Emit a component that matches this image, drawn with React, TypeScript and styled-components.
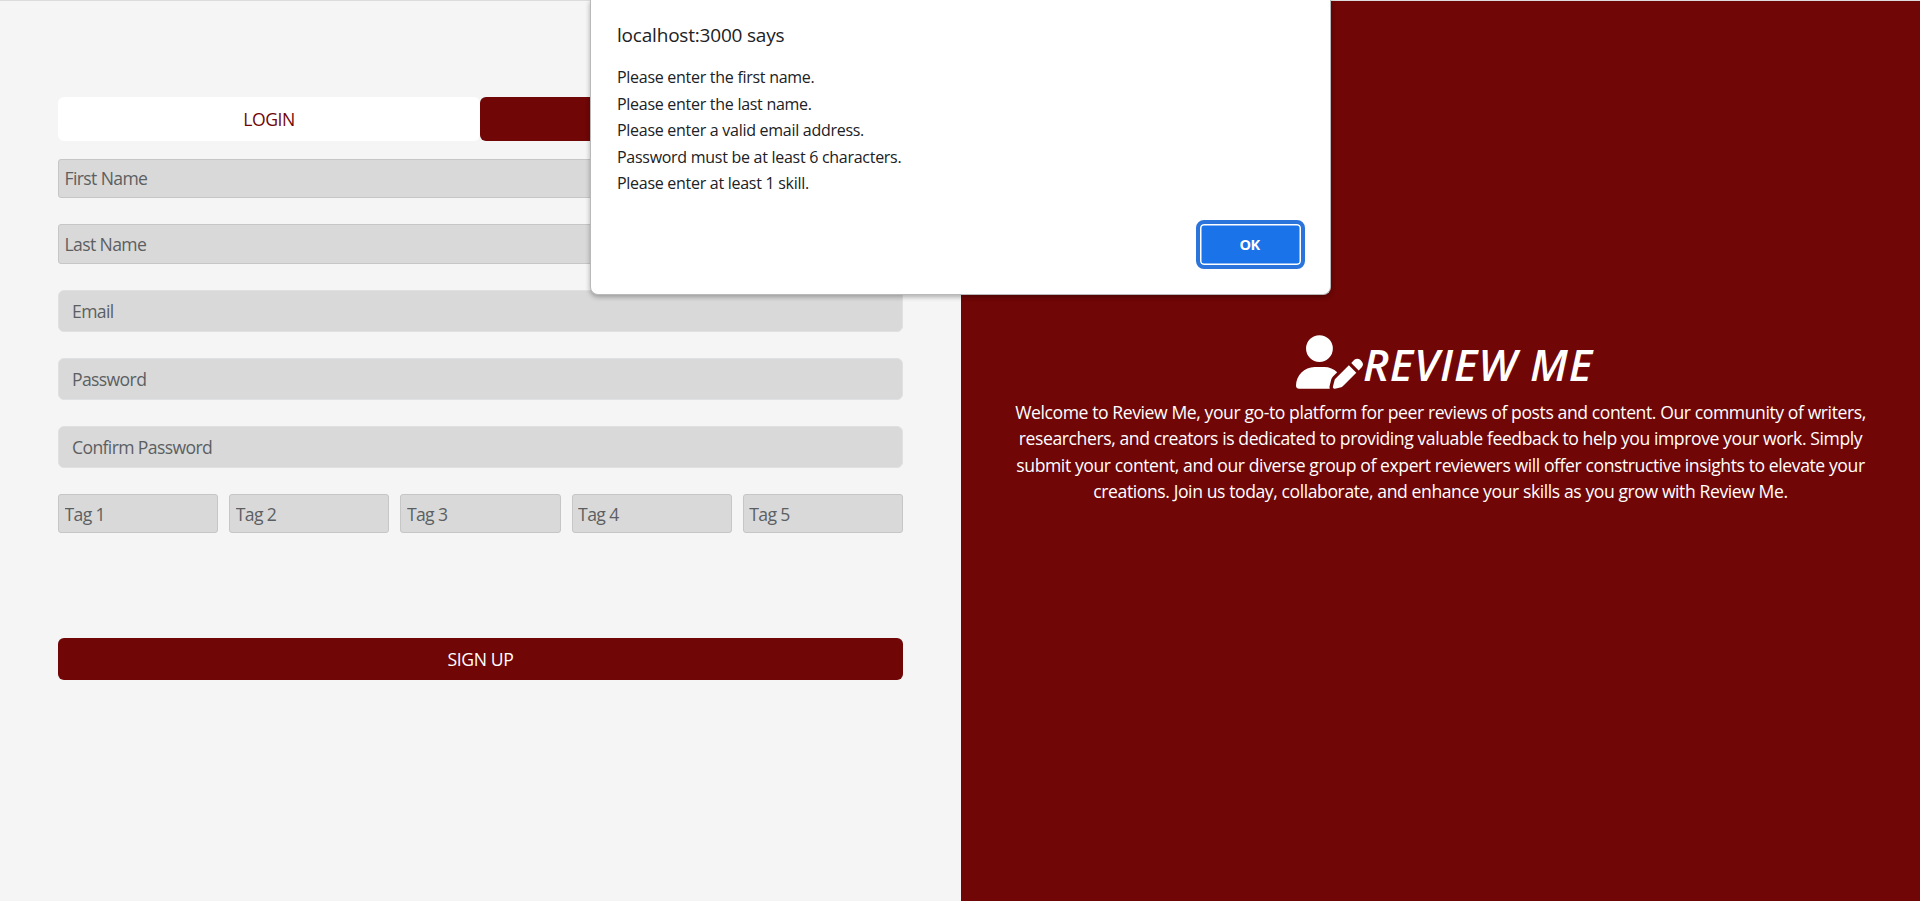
import React from "react";
import styled, { createGlobalStyle } from "styled-components";
import { FaUserPen } from "react-icons/fa6";

const GlobalStyle = createGlobalStyle`
  * { box-sizing: border-box; }
  body {
    margin: 0;
    background: #f5f5f5;
    font-family: "Open Sans", "Noto Sans", sans-serif;
    overflow: hidden;
  }
  input, button { font: inherit; letter-spacing: inherit; margin: 0; }
`;

const MAROON = "#700606";

const Page = styled.div`
  display: grid;
  grid-template-columns: 961px minmax(0, 1fr);
  height: 901px;
  border-top: 1px solid #dcdcdc;
`;

const FormPanel = styled.main`
  padding: 96px 58px 0;
  background: #f5f5f5;
`;

const Tabs = styled.div`
  display: grid;
  grid-template-columns: 422px 1fr;
  margin-bottom: 18px;
`;

const Tab = styled.button<{ $active?: boolean }>`
  height: 44px;
  padding: 0;
  border: 0;
  border-radius: 6px;
  font-size: 17.6px;
  letter-spacing: -0.45px;
  color: ${(p) => (p.$active ? "#fff" : MAROON)};
  background: ${(p) => (p.$active ? MAROON : "#fff")};
`;

const Fields = styled.form`
  display: flex;
  flex-direction: column;
  gap: 26px;
  margin: 0;
`;

const Input = styled.input<{ $rounded?: boolean; $height: number; $low?: boolean }>`
  width: 100%;
  min-width: 0;
  height: ${(p) => p.$height}px;
  padding: ${(p) => (p.$low ? 1 : 0)}px ${(p) => (p.$rounded ? 13 : 5.5)}px ${(p) => (p.$low ? 0 : 1)}px;
  border: 1px solid ${(p) => (p.$rounded ? "#dfe0e1" : "#c6c6c6")};
  border-radius: ${(p) => (p.$rounded ? 6 : 3)}px;
  background: #d9d9d9;
  font-size: 17.6px;
  letter-spacing: -0.63px;
  outline: 0;
  &::placeholder { color: #5c5f62; opacity: 1; }
`;

const TagRow = styled.div`
  display: grid;
  grid-template-columns: repeat(5, 1fr);
  gap: 11px;
`;

const Submit = styled.button`
  height: 42px;
  margin-top: 79px;
  padding: 0;
  border: 0;
  border-radius: 6px;
  background: ${MAROON};
  color: #fff;
  font-size: 17.6px;
  letter-spacing: -0.4px;
`;

const BrandPanel = styled.aside`
  padding: 334px 48px 0;
  background: ${MAROON};
  color: #fff;
  text-align: center;
`;

const Brand = styled.div`
  display: flex;
  justify-content: center;
  align-items: flex-start;
  height: 64px;
  padding-left: 8px;
  svg { width: 67px; height: 54px; flex: none; }
`;

const BrandName = styled.h1`
  margin: 0;
  font-size: 44px;
  line-height: 58px;
  font-weight: 600;
  font-style: italic;
  letter-spacing: 0.95px;
  white-space: nowrap;
`;

const Blurb = styled.p`
  margin: 0;
  font-size: 17.6px;
  line-height: 26.4px;
  letter-spacing: -0.42px;
  white-space: nowrap;
`;

const Dialog = styled.div`
  position: absolute;
  top: 0;
  left: 590px;
  width: 741px;
  height: 295px;
  padding: 19px 25px 0 26px;
  border: 1px solid #b9b9b9;
  border-top: 0;
  border-radius: 0 0 8px 8px;
  background: #fff;
  color: #202124;
  box-shadow: 0 2px 5px rgba(0, 0, 0, 0.3);
  display: flex;
  flex-direction: column;
`;

const DialogTitle = styled.div`
  font-size: 19px;
  line-height: 32px;
  letter-spacing: -0.2px;
`;

const DialogText = styled.div`
  margin-top: 13px;
  font-size: 16px;
  line-height: 26.5px;
  letter-spacing: -0.28px;
`;

const OkButton = styled.button`
  align-self: flex-end;
  width: 109px;
  height: 49px;
  margin-top: 23px;
  padding: 0 2px 0 0;
  border: 4px solid #2a74db;
  border-radius: 8px;
  background: #1a73e8;
  box-shadow: inset 0 0 0 1.5px #fff;
  color: #fff;
  font-size: 14.5px;
  font-weight: 700;
  letter-spacing: -0.6px;
`;

const messages = [
  "Please enter the first name.",
  "Please enter the last name.",
  "Please enter a valid email address.",
  "Password must be at least 6 characters.",
  "Please enter at least 1 skill.",
];

const blurb = [
  "Welcome to Review Me, your go-to platform for peer reviews of posts and content. Our community of writers,",
  "researchers, and creators is dedicated to providing valuable feedback to help you improve your work. Simply",
  "submit your content, and our diverse group of expert reviewers will offer constructive insights to elevate your",
  "creations. Join us today, collaborate, and enhance your skills as you grow with Review Me.",
];

export default function App() {
  return (
    <>
      <GlobalStyle />
      <Page>
        <FormPanel>
          <Tabs>
            <Tab>LOGIN</Tab>
            <Tab $active aria-label="Register" />
          </Tabs>
          <Fields>
            <Input $height={39} placeholder="First Name" />
            <Input $height={40} placeholder="Last Name" />
            <Input $height={42} $rounded placeholder="Email" />
            <Input $height={42} $rounded type="password" placeholder="Password" />
            <Input $height={42} $rounded type="password" placeholder="Confirm Password" />
            <TagRow>
              {[1, 2, 3, 4, 5].map((n) => (
                <Input key={n} $height={39} $low placeholder={`Tag ${n}`} />
              ))}
            </TagRow>
            <Submit type="button">SIGN UP</Submit>
          </Fields>
        </FormPanel>
        <BrandPanel>
          <Brand>
            <FaUserPen />
            <BrandName>REVIEW ME</BrandName>
          </Brand>
          <Blurb>
            {blurb.map((line) => (
              <React.Fragment key={line}>
                {line}
                <br />
              </React.Fragment>
            ))}
          </Blurb>
        </BrandPanel>
      </Page>
      <Dialog role="alertdialog">
        <DialogTitle>localhost:3000 says</DialogTitle>
        <DialogText>
          {messages.map((m) => (
            <div key={m}>{m}</div>
          ))}
        </DialogText>
        <OkButton>OK</OkButton>
      </Dialog>
    </>
  );
}
